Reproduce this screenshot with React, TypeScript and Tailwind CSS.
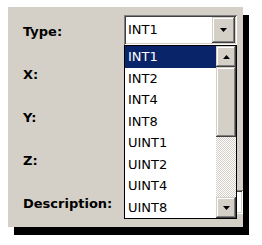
import React from "react";

const sunken =
  "bg-white shadow-[inset_1px_1px_0_#808080,inset_-1px_-1px_0_#ffffff,inset_2px_2px_0_#404040,inset_-2px_-2px_0_#d4d0c8]";
const raised =
  "bg-[#d4d0c8] shadow-[inset_-1px_-1px_0_#404040,inset_1px_1px_0_#d4d0c8,inset_-2px_-2px_0_#808080,inset_2px_2px_0_#ffffff]";

function Arrow({ up }: { up?: boolean }) {
  return (
    <svg width="7" height="4" viewBox="0 0 7 4">
      {up ? (
        <polygon points="0,4 7,4 3.5,0" fill="#000" />
      ) : (
        <polygon points="0,0 7,0 3.5,4" fill="#000" />
      )}
    </svg>
  );
}

const items = ["INT1", "INT2", "INT4", "INT8", "UINT1", "UINT2", "UINT4", "UINT8"];

export default function App() {
  return (
    <div className="w-[262px] h-[245px] bg-white overflow-hidden pt-[7px] pl-[8px] font-['DejaVu_Sans',sans-serif] text-black">
      <div className="relative w-[235px] h-[220px] bg-[#d4d0c8] shadow-[6px_8px_0_0_#000000] pt-[8px] pl-[15px] flex flex-col gap-[13px]">
        <div className="flex items-center h-[30px]">
          <div className="w-[101px] pt-[4px] text-[13px] font-bold">Type:</div>
          <div className={`w-[113px] h-[30px] p-[2px] flex ${sunken}`}>
            <div className="flex-1 flex items-center pl-[2px] text-[13px]">INT1</div>
            <div className={`w-[23px] h-full flex items-center justify-center ${raised}`}>
              <Arrow />
            </div>
          </div>
        </div>
        {["X:", "Y:", "Z:"].map((l) => (
          <div key={l} className="flex items-center h-[30px]">
            <div className="w-[101px] pt-[4px] text-[13px] font-bold">{l}</div>
            <div className={`w-[113px] h-[24px] ${sunken}`} />
          </div>
        ))}
        <div className="flex items-center h-[30px]">
          <div className="w-[101px] pt-[4px] text-[13px] font-bold">Description:</div>
          <div className={`w-[119px] h-[24px] ${sunken}`} />
        </div>

        <div className="absolute left-[116px] top-[38px] w-[113px] border border-black bg-white flex">
          <div className="flex-1 flex flex-col">
            {items.map((it, i) => (
              <div
                key={it}
                className={`h-[21.5px] flex items-center pl-[3px] text-[13px] ${
                  i === 0 ? "bg-[#0a246a] text-white" : ""
                }`}
              >
                {it}
              </div>
            ))}
          </div>
          <div className="w-[20px] flex flex-col">
            <div className={`h-[21px] flex items-center justify-center ${raised}`}>
              <Arrow up />
            </div>
            <div className={`h-[70px] ${raised}`} />
            <div className="h-[60px] [background-image:repeating-conic-gradient(#d4d0c8_0_25%,#ffffff_0_50%)] [background-size:2px_2px]" />
            <div className={`h-[21px] flex items-center justify-center ${raised}`}>
              <Arrow />
            </div>
          </div>
        </div>
      </div>
    </div>
  );
}
